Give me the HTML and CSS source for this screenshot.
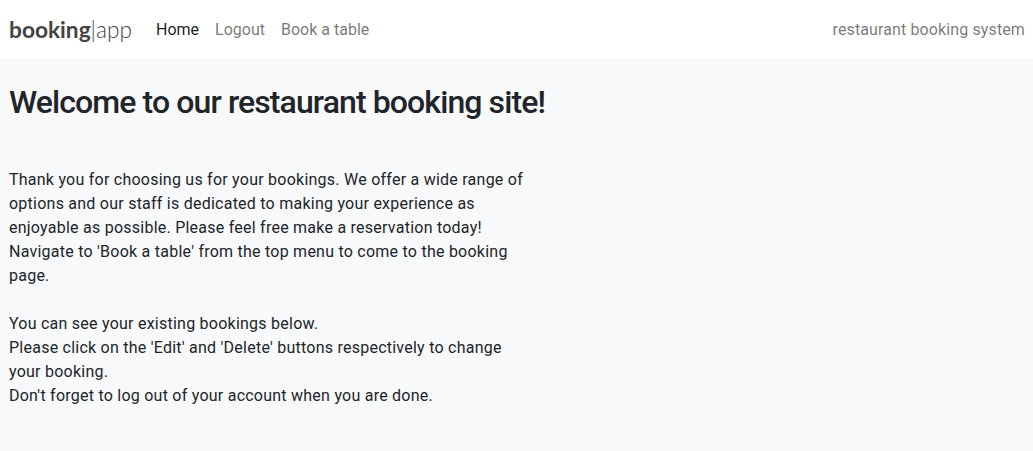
FILE: index.html
```html
<!DOCTYPE html>
<html lang="en">
<head>
<meta charset="utf-8">
<title>booking app</title>
<link rel="stylesheet" href="styles.css">
</head>
<body>
<nav class="navbar">
  <div class="nav-left">
    <a class="brand" href="#"><span class="brand-bold">booking</span><span class="brand-sep">|</span><span class="brand-light">app</span></a>
    <ul class="nav-links">
      <li><a class="nav-link active" href="#">Home</a></li>
      <li><a class="nav-link" href="#">Logout</a></li>
      <li><a class="nav-link" href="#">Book a table</a></li>
    </ul>
  </div>
  <span class="nav-text">restaurant booking system</span>
</nav>
<main class="content">
  <h1 class="title">Welcome to our restaurant booking site!</h1>
  <p class="intro">Thank you for choosing us for your bookings. We offer a wide range of options and our staff is dedicated to making your experience as enjoyable as possible. Please feel free make a reservation today! Navigate to 'Book a table' from the top menu to come to the booking page.<br><br>You can see your existing bookings below.<br>Please click on the 'Edit' and 'Delete' buttons respectively to change your booking.<br>Don't forget to log out of your account when you are done.</p>
</main>
</body>
</html>
```

FILE: styles.css
```css
html, body {
  margin: 0;
  padding: 0;
}
body {
  background: #f8f9fa;
  color: #212529;
  font-family: Roboto, "Noto Sans", sans-serif;
  font-size: 16px;
  line-height: 24px;
  min-height: 451px;
}
.navbar {
  background: #fff;
  height: 58px;
  display: flex;
  align-items: center;
  justify-content: space-between;
  padding: 2px 8px 0 9px;
  box-sizing: border-box;
}
.nav-left {
  display: flex;
  align-items: center;
}
.brand {
  text-decoration: none;
  font-family: Lato, sans-serif;
  font-size: 22.7px;
  margin-right: 24px;
  display: flex;
  align-items: baseline;
  color: #444;
}
.brand-bold { font-weight: 700; }
.brand-sep { font-weight: 300; }
.brand-light { font-weight: 300; }
.nav-links {
  list-style: none;
  margin: 0;
  padding: 0;
  display: flex;
  gap: 16px;
}
.nav-link {
  text-decoration: none;
  color: rgba(0,0,0,0.55);
}
.nav-link.active {
  color: rgba(0,0,0,0.9);
}
.nav-text {
  color: rgba(0,0,0,0.55);
  letter-spacing: 0.12px;
}
.content {
  padding: 0 9px;
}
.title {
  margin: 0;
  padding-top: 25px;
  font-size: 32px;
  font-weight: 500;
  line-height: 38px;
  letter-spacing: -0.9px;
}
.intro {
  width: 525px;
  margin: 47px 0 0;
  letter-spacing: 0.24px;
}
```
